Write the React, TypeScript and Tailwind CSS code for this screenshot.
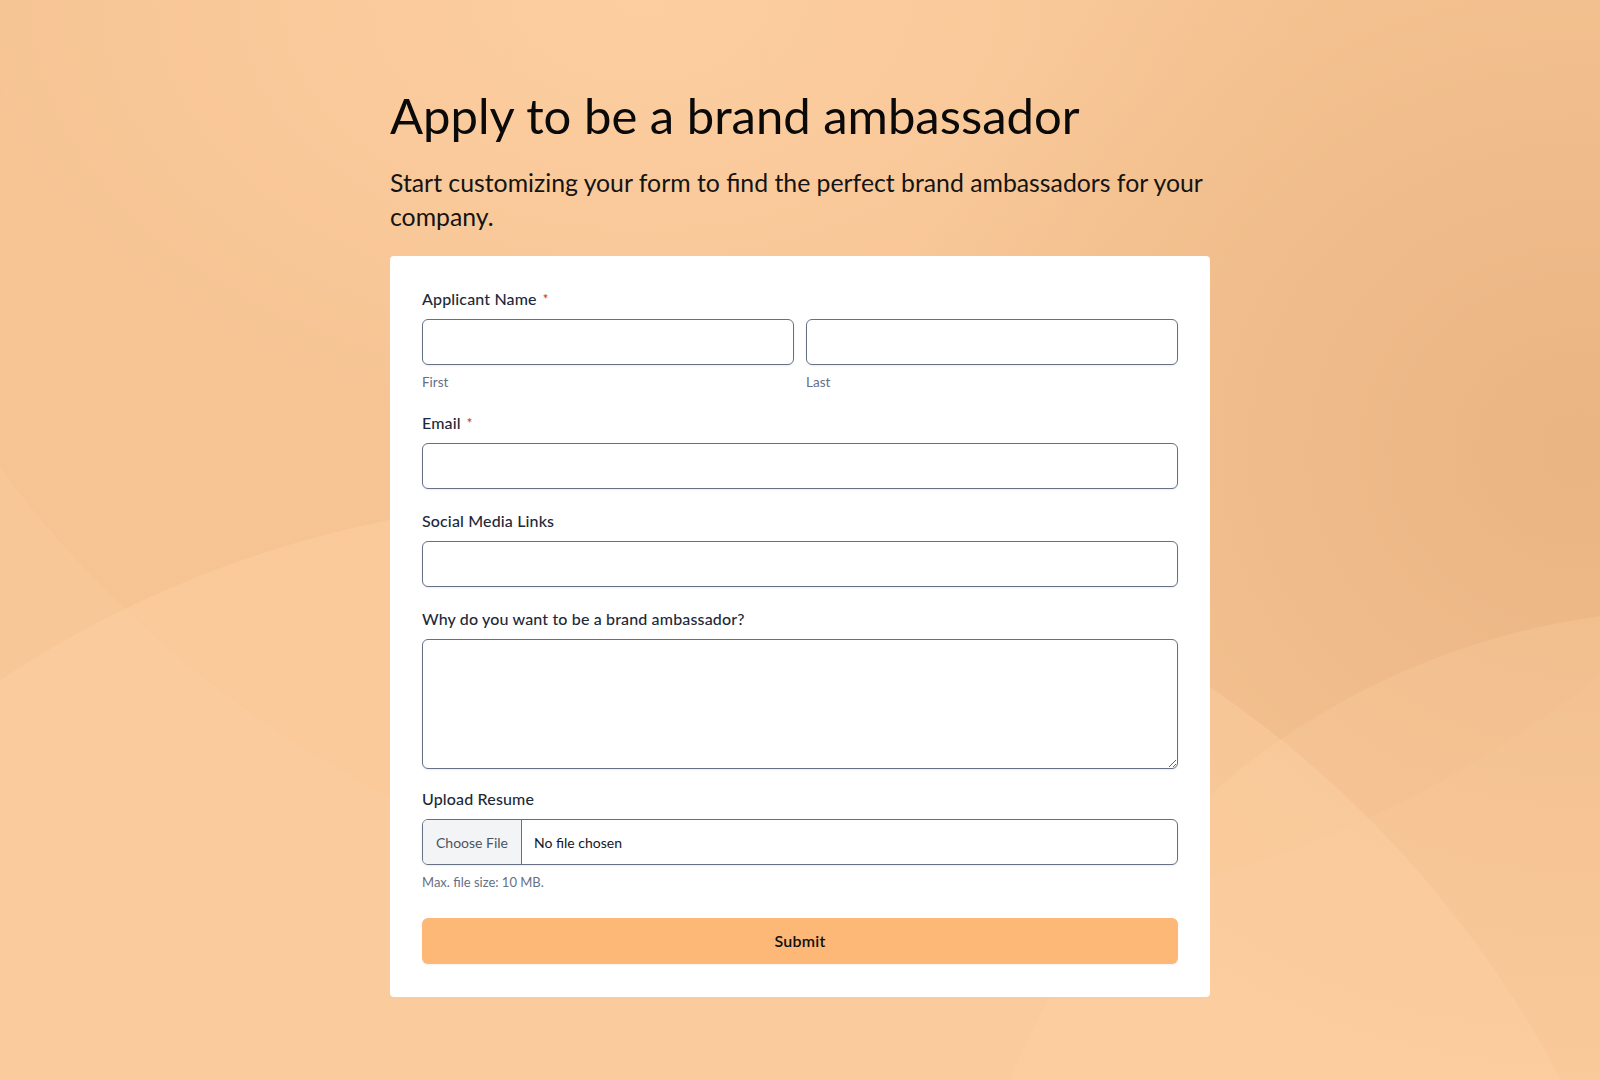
import React from "react";

function Label({ children, required }: { children: React.ReactNode; required?: boolean }) {
  return (
    <div className="flex items-center text-[16px] leading-[22px] font-medium tracking-[0.15px] text-[#1d2939]">
      <span>{children}</span>
      {required && <span className="ml-[6px] text-[13px] leading-none text-[#d92d20]">*</span>}
    </div>
  );
}

const inputCls =
  "block w-full h-[46px] rounded-md border border-[#667085] bg-white px-3 text-[15px] text-[#101828] shadow-[0_1px_2px_rgba(16,24,40,0.08)] outline-none";

export default function App() {
  return (
    <div className="min-h-screen w-full font-['Lato',sans-serif] bg-[#f8c797] bg-[radial-gradient(circle_at_600px_1585px,rgba(255,212,166,0.35)_0_1085px,transparent_1086px),radial-gradient(circle_at_1700px_1350px,rgba(255,210,165,0.25)_0_740px,transparent_741px),radial-gradient(circle_at_900px_-200px,rgba(220,150,90,0.06)_0_1120px,transparent_1121px),radial-gradient(ellipse_700px_650px_at_1580px_450px,#ebb685_0%,rgba(235,182,133,0)_100%),radial-gradient(ellipse_700px_450px_at_640px_0px,#fed2a5_0%,rgba(254,210,165,0)_100%)]">
      <div className="mx-auto w-[820px] pt-[86px] pb-[83px]">
        <h1 className="text-[49px] leading-[58px] font-normal text-[#0a0a0a]">Apply to be a brand ambassador</h1>
        <p className="mt-[22px] text-[24.8px] leading-[34px] text-[#141414]">
          Start customizing your form to find the perfect brand ambassadors for your company.
        </p>
        <form className="mt-[22px] rounded-[4px] bg-white px-8 pt-8 pb-[33px]">
          <Label required>Applicant Name</Label>
          <div className="mt-[9px] grid grid-cols-2 gap-3">
            <div>
              <input className={inputCls} type="text" />
              <div className="mt-2 text-[13.5px] leading-[18px] text-[#667085]">First</div>
            </div>
            <div>
              <input className={inputCls} type="text" />
              <div className="mt-2 text-[13.5px] leading-[18px] text-[#667085]">Last</div>
            </div>
          </div>

          <div className="mt-[21px]">
            <Label required>Email</Label>
            <input className={`mt-[9px] ${inputCls}`} type="email" />
          </div>

          <div className="mt-[21px]">
            <Label>Social Media Links</Label>
            <input className={`mt-[9px] ${inputCls}`} type="text" />
          </div>

          <div className="mt-[21px]">
            <Label>Why do you want to be a brand ambassador?</Label>
            <textarea className="mt-[9px] block h-[130px] w-full rounded-md border border-[#667085] bg-white px-3 py-2 text-[15px] shadow-[0_1px_2px_rgba(16,24,40,0.08)] outline-none" />
          </div>

          <div className="mt-[19px]">
            <Label>Upload Resume</Label>
            <div className="mt-[9px] flex h-[46px] w-full overflow-hidden rounded-md border border-[#667085] bg-white shadow-[0_1px_2px_rgba(16,24,40,0.08)]">
              <span className="flex w-[99px] items-center justify-center border-r border-[#667085] bg-[#f3f4f6] text-[14px] text-[#475467]">
                Choose File
              </span>
              <span className="flex items-center pl-3 text-[14px] text-[#101828]">No file chosen</span>
            </div>
            <div className="mt-2 text-[13px] leading-[18px] text-[#667085]">Max. file size: 10 MB.</div>
          </div>

          <button
            type="button"
            className="mt-[27px] block h-[46px] w-full rounded-md bg-[#fdb777] text-[16px] font-semibold tracking-[0.2px] text-[#101010] shadow-[0_1px_2px_rgba(16,24,40,0.06)]"
          >
            Submit
          </button>
        </form>
      </div>
    </div>
  );
}
